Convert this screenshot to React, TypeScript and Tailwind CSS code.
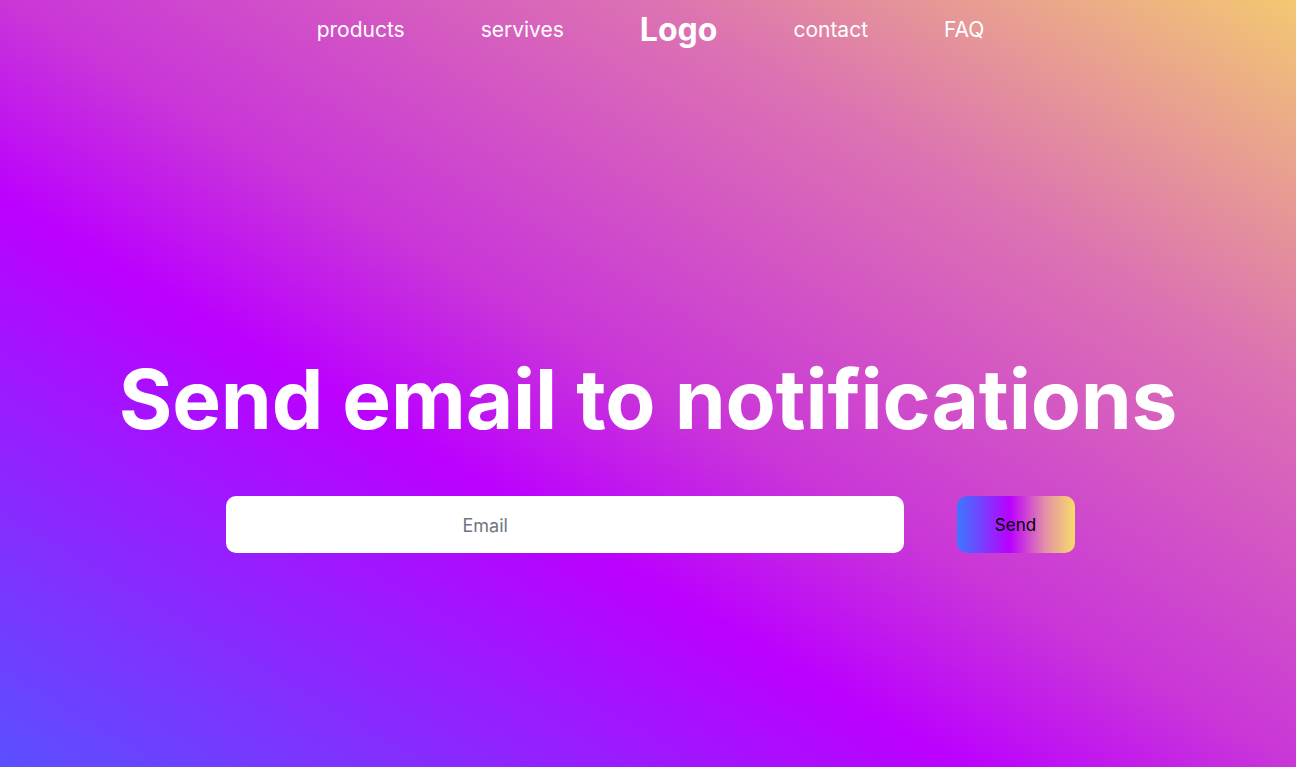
import React from "react";

export default function App() {
  return (
    <div className="w-full h-[767px] overflow-hidden bg-[linear-gradient(to_top_right,#5a50ff_0%,#bb00ff_37%,#c936d8_50%,#dc72b2_75%,#f3c872_100%)] text-white font-['Inter','Open_Sans',sans-serif]">
      <nav className="flex h-[58px] items-center justify-center gap-[76px] pl-[5px] pt-[2px]">
        <a className="text-[21px] font-normal">products</a>
        <a className="text-[21px] font-normal">servives</a>
        <a className="text-[32px] font-bold">Logo</a>
        <a className="text-[21px] font-normal">contact</a>
        <a className="text-[21px] font-normal">FAQ</a>
      </nav>
      <h1 className="mt-[299px] text-center text-[82px] font-bold leading-[86px] tracking-[-0.2px]">
        Send email to notifications
      </h1>
      <form className="mt-[53px] flex justify-center gap-[53px] pl-[4px]" onSubmit={(e) => e.preventDefault()}>
        <input
          type="email"
          placeholder="Email"
          className="h-[57px] w-[678px] rounded-[10px] bg-white pl-[237px] pt-[1px] text-[18px] text-gray-700 outline-none placeholder:text-[#6f7680]"
        />
        <button
          type="submit"
          className="h-[57px] w-[118px] rounded-[10px] bg-[linear-gradient(to_right,#3a78ff_0%,#bb00ff_45%,#e392a6_75%,#f7dc6a_100%)] pt-[2px] text-[17px] text-black"
        >
          Send
        </button>
      </form>
    </div>
  );
}
